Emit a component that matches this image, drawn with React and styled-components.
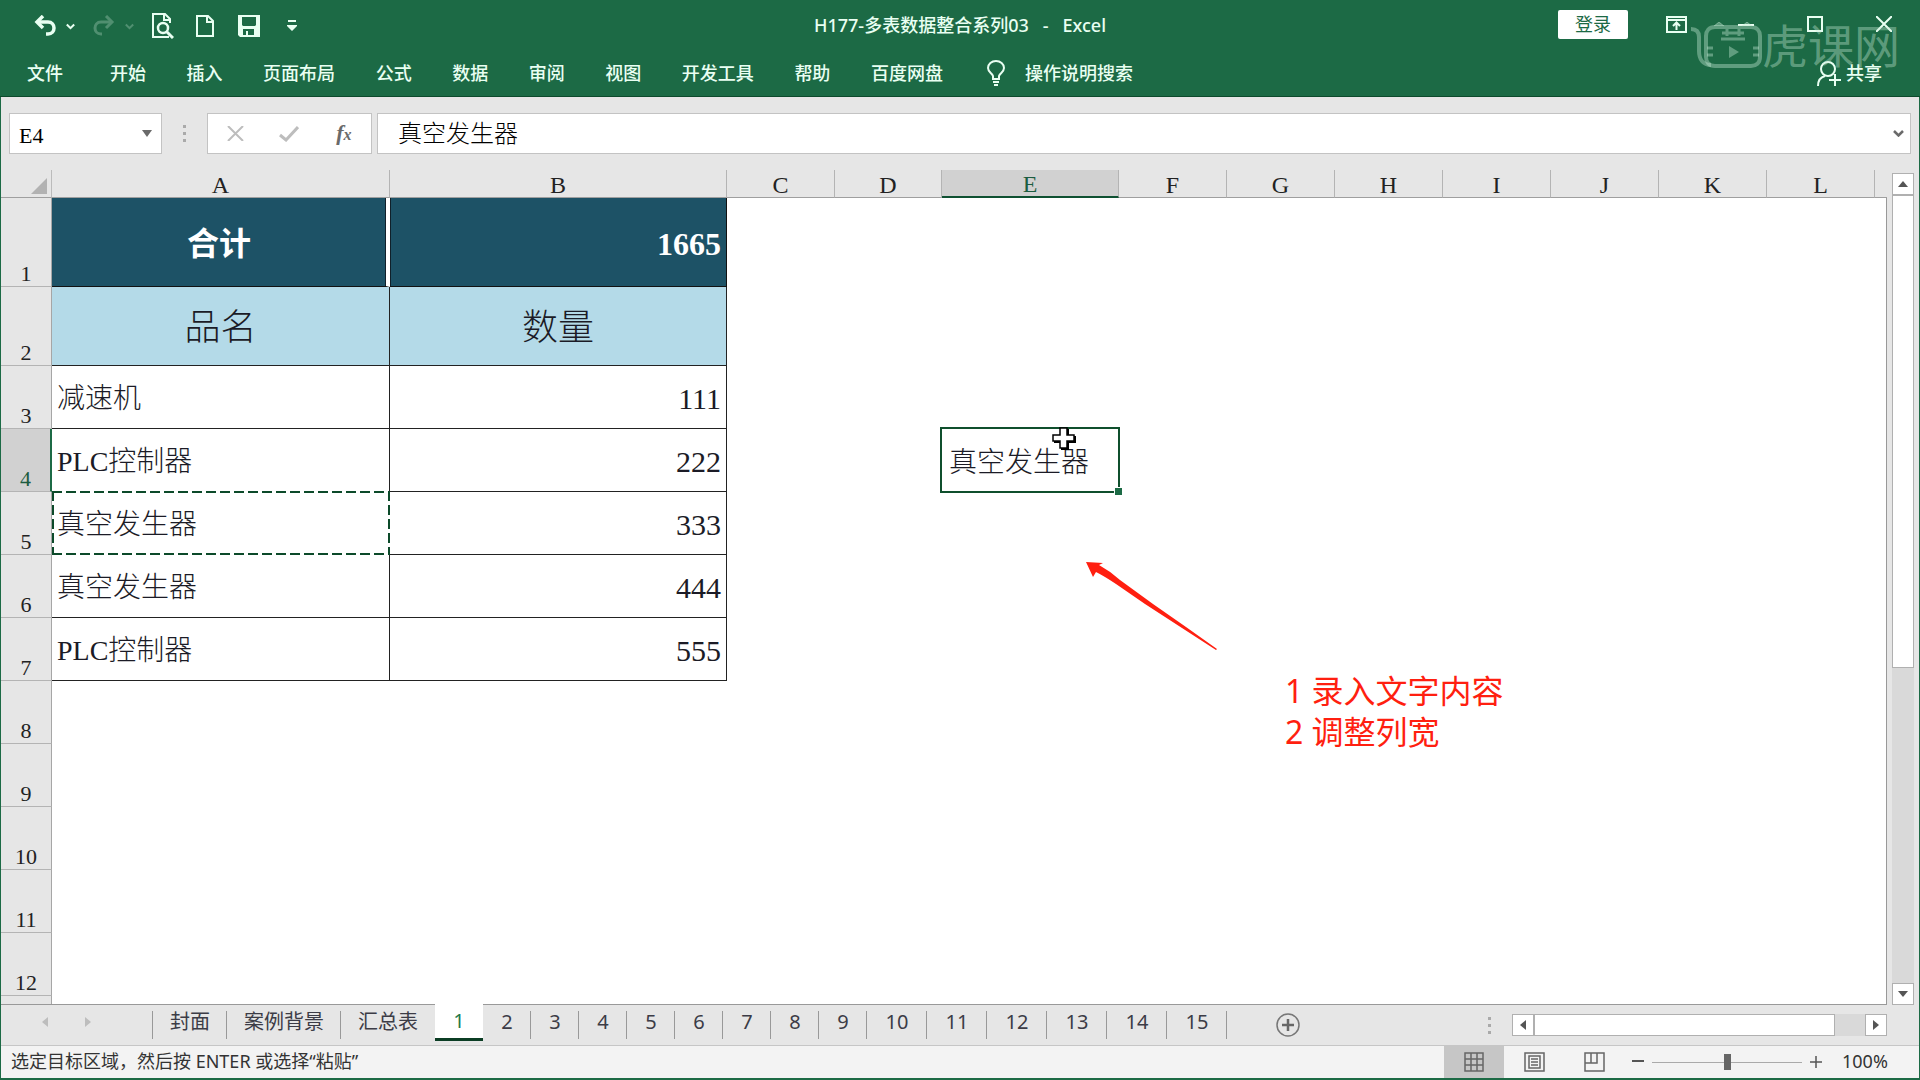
import React, { useState } from 'react';
import styled, { createGlobalStyle, css } from 'styled-components';

const UI_FONT = '"Noto Sans", "Noto Sans CJK SC", sans-serif';
const CELL_FONT = '"Liberation Serif", "Noto Sans CJK SC", serif';

const COLUMNS = [
	{ name: 'A', width: 338 },
	{ name: 'B', width: 337 },
	{ name: 'C', width: 108 },
	{ name: 'D', width: 107 },
	{ name: 'E', width: 177 },
	{ name: 'F', width: 108 },
	{ name: 'G', width: 108 },
	{ name: 'H', width: 108 },
	{ name: 'I', width: 108 },
	{ name: 'J', width: 108 },
	{ name: 'K', width: 108 },
	{ name: 'L', width: 108 },
];

const ROWS = [
	{ height: 89, kind: 'total', A: '合计', B: '1665' },
	{ height: 79, kind: 'head', A: '品名', B: '数量' },
	{ height: 63, kind: 'data', A: '减速机', B: '111' },
	{ height: 63, kind: 'data', A: 'PLC控制器', B: '222', E: '真空发生器' },
	{ height: 63, kind: 'data', A: '真空发生器', B: '333' },
	{ height: 63, kind: 'data', A: '真空发生器', B: '444' },
	{ height: 63, kind: 'data', A: 'PLC控制器', B: '555' },
	{ height: 63 },
	{ height: 63 },
	{ height: 63 },
	{ height: 63 },
	{ height: 63 },
];

const MENUS = [
	'开始',
	'插入',
	'页面布局',
	'公式',
	'数据',
	'审阅',
	'视图',
	'开发工具',
	'帮助',
	'百度网盘',
];

const SHEETS = ['封面', '案例背景', '汇总表'].concat(
	Array.from({ length: 15 }, (_, i) => String(i + 1)),
);

function App() {
	return (
		<Window>
			<GlobalStyle />
			<Header>
				<TitleBar />
				<Menu />
				<Watermark />
			</Header>
			<Main>
				<FormulaBar />
				<Work>
					<Sheet />
					<VScroll>
						<ScrollBtn aria-label="向上滚动">
							<Triangle dir="up" />
						</ScrollBtn>
						<VTrack>
							<VThumb />
						</VTrack>
						<ScrollBtn aria-label="向下滚动">
							<Triangle dir="down" />
						</ScrollBtn>
					</VScroll>
				</Work>
				<SheetTabs />
				<StatusBar />
			</Main>
		</Window>
	);
}

export default App;

function TitleBar() {
	return (
		<TitleRow>
			<QuickAccess>
				<QuickPair>
					<IconBtn aria-label="撤消">
						<svg width="22" height="22" viewBox="0 0 22 22" fill="none" stroke="currentColor" strokeWidth="3.500">
							<path d="M3 7h11c4 0 6 3 6 6s-2 6-6 6h-2" />
							<path d="M9 1L3 7l6 6" />
						</svg>
					</IconBtn>
					<IconBtn aria-label="撤消列表">
						<Chevron width={9} />
					</IconBtn>
				</QuickPair>
				<QuickPair $off>
					<IconBtn aria-label="恢复">
						<svg width="22" height="22" viewBox="0 0 22 22" fill="none" stroke="currentColor" strokeWidth="3">
							<path d="M19 7H8c-4 0-6 3-6 6s2 6 6 6h1" />
							<path d="M13 1l6 6-6 6" />
						</svg>
					</IconBtn>
					<IconBtn aria-label="恢复列表">
						<Chevron width={9} />
					</IconBtn>
				</QuickPair>
				<IconBtn aria-label="打印预览">
					<svg width="22" height="26" viewBox="0 0 22 26" fill="none" stroke="currentColor" strokeWidth="2">
						<path d="M17 24H1V1h12l5 5v4" />
						<path d="M12 2v5h5" />
						<circle cx="11" cy="15" r="5" strokeWidth="2.500" />
						<path d="M15 19l6 6" strokeWidth="3" />
					</svg>
				</IconBtn>
				<IconBtn $w={26} aria-label="新建">
					<svg width="18" height="22" viewBox="0 0 18 22" fill="none" stroke="currentColor" strokeWidth="2">
						<path d="M1 1h11l5 5v15H1z" />
						<path d="M11 1v6h6" />
					</svg>
				</IconBtn>
				<IconBtn $w={26} aria-label="保存">
					<svg width="22" height="22" viewBox="0 0 22 22" fill="currentColor">
						<path
							fillRule="evenodd"
							d="M0 0h22v22H2l-2-2zM4 2v8l1 1h12l1-1V2zM5 14v6h3v-4h2v4h6v-6z"
						/>
					</svg>
				</IconBtn>
				<IconBtn $w={24} aria-label="自定义快速访问工具栏">
					<svg width="10" height="12" viewBox="0 0 10 12" fill="currentColor">
						<path d="M1 0h8v2H1zM0 5h10v1L5 11 0 6z" />
					</svg>
				</IconBtn>
			</QuickAccess>
			<DocTitle>
				H177-多表数据整合系列03<Dash>-</Dash>Excel
			</DocTitle>
			<WindowTools>
				<Login>登录</Login>
				<IconBtn $w={69} aria-label="功能区显示选项">
					<svg width="21" height="17" viewBox="0 0 21 17" fill="none" stroke="currentColor" strokeWidth="2">
						<path d="M1 1h19v15H1zM1 4h19" />
						<path d="M10.500 14V7M7 10l3.500-3.500L14 10" />
					</svg>
				</IconBtn>
				<IconBtn $w={69} aria-label="最小化">
					<svg width="16" height="16" viewBox="0 0 16 16" stroke="currentColor" strokeWidth="2">
						<path d="M0 9h16" />
					</svg>
				</IconBtn>
				<IconBtn $w={69} aria-label="最大化">
					<svg width="16" height="16" viewBox="0 0 16 16" fill="none" stroke="currentColor" strokeWidth="2">
						<path d="M1 1h14v14H1z" />
					</svg>
				</IconBtn>
				<IconBtn $w={69} aria-label="关闭">
					<svg width="16" height="16" viewBox="0 0 16 16" stroke="currentColor" strokeWidth="2">
						<path d="M0 0l16 16M16 0L0 16" />
					</svg>
				</IconBtn>
			</WindowTools>
		</TitleRow>
	);
}

function Chevron({ width = 11 }) {
	return (
		<svg width={width} height="7" viewBox="0 0 11 7" fill="none" stroke="currentColor" strokeWidth="2.500">
			<path d="M1 1l4.500 4.500L10 1" />
		</svg>
	);
}

function Menu() {
	return (
		<MenuRow>
			<MenuBtn $file>文件</MenuBtn>
			<MenuList>
				{MENUS.map(name => (
					<MenuBtn key={name}>{name}</MenuBtn>
				))}
			</MenuList>
			<MenuBtn $tell>
				<svg width="18" height="26" viewBox="0 0 18 26" fill="none" stroke="currentColor" strokeWidth="2">
					<path d="M6 19v-3C5 13 1 12 1 8a8 7 0 0 1 16 0c0 4-4 5-5 8v3z" />
					<path d="M6 22h6M7 25h4" />
				</svg>
				操作说明搜索
			</MenuBtn>
			<MenuBtn $share>
				<svg width="24" height="26" viewBox="0 0 24 26" fill="none" stroke="currentColor" strokeWidth="2">
					<circle cx="11" cy="9" r="7" />
					<path d="M1 26c0-6 3-9 7-10M12 20h12M18 14v12" />
				</svg>
				共享
			</MenuBtn>
		</MenuRow>
	);
}

function Watermark() {
	return (
		<Brand>
			<svg width="71" height="46" viewBox="0 0 71 46" fill="none" stroke="currentColor" strokeWidth="4">
				<path d="M0 7c6 0 8 3 8 8v14c0 8 4 14 12 14" />
				<path d="M24 5h36c6 0 9 4 9 9v21c0 6-4 9-9 9H24c-6 0-9-4-9-9V14c0-5 3-9 9-9z" />
				<path d="M23 4l5-4 5 4M51 4l5-4 5 4" fill="currentColor" strokeWidth="1" />
				<path d="M31 11h22M36 7v7M48 7v7M30 17h24" strokeWidth="3" />
				<path d="M16 26h6M16 33h6M62 26h6M62 33h6" strokeWidth="3" />
				<path d="M38 24l10 6-10 6z" fill="currentColor" stroke="none" />
			</svg>
			虎课网
		</Brand>
	);
}

function FormulaBar() {
	const [address, setAddress] = useState('E4');
	const [formula, setFormula] = useState('真空发生器');

	return (
		<FormulaRow>
			<NameBox>
				<NameInput
					aria-label="名称框"
					value={address}
					onChange={e => setAddress(e.target.value)}
				/>
				<GreyBtn aria-label="名称列表">
					<svg width="10" height="7" viewBox="0 0 10 7" fill="currentColor">
						<path d="M0 0h10L5 7z" />
					</svg>
				</GreyBtn>
			</NameBox>
			<Dots />
			<FormulaTools>
				<GreyBtn $pale aria-label="取消">
					<svg width="17" height="15" viewBox="0 0 17 15" stroke="currentColor" strokeWidth="2">
						<path d="M1 0l15 15M16 0L1 15" />
					</svg>
				</GreyBtn>
				<GreyBtn $pale aria-label="输入">
					<svg width="20" height="16" viewBox="0 0 20 16" fill="none" stroke="currentColor" strokeWidth="3">
						<path d="M1 9l6 5L19 1" />
					</svg>
				</GreyBtn>
				<GreyBtn aria-label="插入函数">
					<Fx>
						f<small>x</small>
					</Fx>
				</GreyBtn>
			</FormulaTools>
			<FormulaBox>
				<FormulaInput
					aria-label="编辑栏"
					value={formula}
					onChange={e => setFormula(e.target.value)}
				/>
				<GreyBtn aria-label="展开编辑栏">
					<Chevron />
				</GreyBtn>
			</FormulaBox>
		</FormulaRow>
	);
}

function Dots() {
	return (
		<DotColumn>
			<i />
			<i />
			<i />
		</DotColumn>
	);
}

function Sheet() {
	return (
		<SheetWrap>
			<Table>
				<colgroup>
					<Col $width={51} />
					{COLUMNS.map(col => (
						<Col key={col.name} $width={col.width} />
					))}
					<Col />
				</colgroup>
				<thead>
					<tr>
						<Corner>
							<svg width="16" height="16" viewBox="0 0 16 16" fill="#b2b2b2">
								<path d="M16 0v16H0z" />
							</svg>
						</Corner>
						{COLUMNS.map(col => (
							<ColHead key={col.name} scope="col" $active={col.name === 'E'}>
								{col.name}
							</ColHead>
						))}
						<ColHead as="td" $last />
					</tr>
				</thead>
				<tbody>
					{ROWS.map((row, i) => (
						<Row key={i} $height={row.height}>
							<RowHead scope="row" $active={i === 3}>
								{i + 1}
							</RowHead>
							{COLUMNS.map(col => {
								const filled = row.kind && (col.name === 'A' || col.name === 'B');
								const copied = i === 4 && col.name === 'A';
								const selected = i === 3 && col.name === 'E';
								return (
									<Cell
										key={col.name}
										$kind={filled ? row.kind : undefined}
										$col={col.name}
										$raised={copied || selected}
									>
										{row[col.name]}
										{copied && <Ants />}
										{selected && (
											<Selection>
												<Handle />
											</Selection>
										)}
									</Cell>
								);
							})}
							<Cell $last />
						</Row>
					))}
					<Row $height={63}>
						<RowHead as="td" />
						{COLUMNS.map(col => (
							<Cell key={col.name} />
						))}
						<Cell $last />
					</Row>
				</tbody>
			</Table>
			<Cursor width="25" height="26" viewBox="0 0 25 26">
				<path d="M9 3h8v7h7v7h-7v7H9v-7H2v-7h7z" fill="#000" />
				<path d="M8 2h7v7h7v6h-7v7H8v-7H1V9h7z" fill="#fff" stroke="#000" strokeWidth="1.500" />
			</Cursor>
			<Arrow width="132" height="90" viewBox="0 0 132 90">
				<path
					d="M0 0L17 1 13 3Q24 9 34 18L67 42 100 65 131 87 130 88 96 66 59 42 30 22Q18 14 10 10L7 15z"
					fill="#ff1f10"
				/>
			</Arrow>
			<Note>
				1 录入文字内容
				<br />2 调整列宽
			</Note>
		</SheetWrap>
	);
}

function Triangle({ dir }) {
	const d = {
		up: 'M0 8l5-6 5 6z',
		down: 'M0 2h10L5 8z',
		left: 'M8 0v10L2 5z',
		right: 'M2 0l6 5-6 5z',
	}[dir];
	return (
		<svg width="10" height="10" viewBox="0 0 10 10" fill="currentColor">
			<path d={d} />
		</svg>
	);
}

function SheetTabs() {
	const [active, setActive] = useState('1');

	return (
		<TabBar>
			<TabNav>
				<GreyBtn $pale aria-label="上一张">
					<Triangle dir="left" />
				</GreyBtn>
				<GreyBtn $pale aria-label="下一张">
					<Triangle dir="right" />
				</GreyBtn>
			</TabNav>
			{SHEETS.map((name, i) => (
				<Tab
					key={name}
					$active={name === active}
					$beforeActive={SHEETS[i + 1] === active}
					$min={name.length === 1 ? 48 : 60}
					onClick={() => setActive(name)}
				>
					{name}
				</Tab>
			))}
			<AddSheet aria-label="新工作表">
				<svg width="24" height="24" viewBox="0 0 24 24" fill="none" stroke="#777">
					<circle cx="12" cy="12" r="11" strokeWidth="1.500" />
					<path d="M12 6v12M6 12h12" stroke="#666" strokeWidth="2.500" />
				</svg>
			</AddSheet>
			<Dots />
			<HScroll>
				<ScrollBtn aria-label="向左滚动">
					<Triangle dir="left" />
				</ScrollBtn>
				<HTrack>
					<HThumb />
				</HTrack>
				<ScrollBtn aria-label="向右滚动">
					<Triangle dir="right" />
				</ScrollBtn>
			</HScroll>
		</TabBar>
	);
}

function StatusBar() {
	const [zoom, setZoom] = useState(100);

	return (
		<Status>
			<StatusText>选定目标区域，然后按 ENTER 或选择“粘贴”</StatusText>
			<ViewBtn $active aria-label="普通">
				<svg width="20" height="20" viewBox="0 0 20 20" fill="none" stroke="#666" strokeWidth="1.500">
					<path d="M1 1h18v18H1zM7 1v18M13 1v18M1 7h18M1 13h18" />
				</svg>
			</ViewBtn>
			<ViewBtn aria-label="页面布局">
				<svg width="21" height="20" viewBox="0 0 21 20" fill="none" stroke="#666" strokeWidth="1.500">
					<path d="M1 1h19v18H1zM5 4h11v12H5zM7 7h7M7 10h7M7 13h7" />
				</svg>
			</ViewBtn>
			<ViewBtn aria-label="分页预览">
				<svg width="21" height="20" viewBox="0 0 21 20" fill="none" stroke="#666" strokeWidth="1.500">
					<path d="M1 1h19v18H1zM1 11h12V1M7 1v10" />
				</svg>
			</ViewBtn>
			<ZoomBtn aria-label="缩小" onClick={() => setZoom(zoom - 10)}>
				<svg width="12" height="12" viewBox="0 0 12 12" stroke="#555" strokeWidth="2">
					<path d="M0 5h12" />
				</svg>
			</ZoomBtn>
			<Zoom
				type="range"
				aria-label="显示比例"
				min="0"
				max="200"
				value={zoom}
				onChange={e => setZoom(Number(e.target.value))}
			/>
			<ZoomBtn aria-label="放大" onClick={() => setZoom(zoom + 10)}>
				<svg width="12" height="12" viewBox="0 0 12 12" stroke="#555" strokeWidth="1.500">
					<path d="M0 6h12M6 0v12" />
				</svg>
			</ZoomBtn>
			<Percent>{zoom}%</Percent>
		</Status>
	);
}

const GlobalStyle = createGlobalStyle`
	* {
		box-sizing: border-box;
	}
	body {
		margin: 0;
		font-family: ${UI_FONT};
	}
	button, input {
		margin: 0;
		padding: 0;
		border: none;
		background: none;
		font: inherit;
		color: inherit;
	}
	svg {
		display: block;
		flex: none;
	}
`;

const CenterCSS = css`
	display: flex;
	align-items: center;
	justify-content: center;
`;

const Window = styled.div`
	display: flex;
	flex-direction: column;
	height: 100vh;
	overflow: hidden;
`;
const Header = styled.header`
	position: relative;
	background: #1c6a45;
	border-bottom: 1px solid #0d4a2c;
	color: #e9fff2;
	font-size: 18px;
	line-height: 24px;
`;
const TitleRow = styled.div`
	display: grid;
	grid-template-columns: 1fr auto 1fr;
	align-items: center;
	height: 48px;
	padding: 0 2px;
`;
const QuickAccess = styled.div`
	display: flex;
	align-items: center;
	gap: 18px;
	padding: 4px 0 0 32px;
`;
const QuickPair = styled.div`
	display: flex;
	align-items: center;
	gap: 10px;
	opacity: ${({ $off }) => ($off ? 0.25 : 1)};
`;
const IconBtn = styled.button`
	${CenterCSS}
	width: ${({ $w }) => ($w ? $w + 'px' : 'auto')};
`;
const DocTitle = styled.div`
	padding-top: 2px;
	font-weight: 500;
`;
const Dash = styled.span`
	margin: 0 14px;
`;
const WindowTools = styled.div`
	display: flex;
	align-items: center;
	justify-content: flex-end;
`;
const Login = styled.button`
	width: 70px;
	height: 29px;
	margin-right: 14px;
	border-radius: 2px;
	background: #fff;
	color: #1c6a45;
`;
const MenuRow = styled.nav`
	display: flex;
	align-items: center;
	height: 48px;
	padding: 2px 38px 0 27px;
`;
const MenuList = styled.div`
	display: flex;
	justify-content: space-between;
	flex: 0 0 833px;
`;
const MenuBtn = styled.button`
	display: flex;
	align-items: center;
	gap: ${({ $share }) => ($share ? 5 : 20)}px;
	margin-right: ${({ $file }) => ($file ? 47 : 0)}px;
	margin-left: ${({ $share, $tell }) => ($share ? 'auto' : $tell ? '44px' : 0)};
	font-weight: 500;
`;
const Brand = styled.div`
	position: absolute;
	top: 22px;
	right: 20px;
	display: flex;
	align-items: center;
	color: rgba(200, 235, 215, 0.4);
	font-size: 46px;
	line-height: 42px;
	pointer-events: none;
`;
const Main = styled.main`
	flex: 1;
	min-height: 0;
	display: flex;
	flex-direction: column;
	background: #e6e6e6;
	border: solid #1c6a45;
	border-width: 0 1px 2px;
`;
const FormulaRow = styled.div`
	display: flex;
	padding: 16px 8px;
`;
const BoxCSS = css`
	display: flex;
	height: 41px;
	border: 1px solid #c3c3c3;
	background: #fff;
`;
const NameBox = styled.div`
	${BoxCSS}
	width: 153px;
	padding-right: 9px;
`;
const NameInput = styled.input`
	flex: 1;
	min-width: 0;
	padding: 4px 0 0 9px;
	font-family: ${CELL_FONT};
	font-size: 22px;
`;
const GreyBtn = styled.button`
	${CenterCSS}
	color: ${({ $pale }) => ($pale ? '#bdbdbd' : '#6a6a6a')};
`;
const DotColumn = styled.div`
	${CenterCSS}
	flex-direction: column;
	gap: 4px;
	width: 45px;
	i {
		width: 3px;
		height: 3px;
		background: #aaa;
	}
`;
const FormulaTools = styled.div`
	${BoxCSS}
	width: 165px;
	margin-right: 5px;
	${GreyBtn} {
		flex: 1;
	}
`;
const Fx = styled.span`
	font: italic bold 22px/24px 'Liberation Serif', serif;
	small {
		font-size: 16px;
	}
`;
const FormulaBox = styled.div`
	${BoxCSS}
	flex: 1;
	padding-right: 6px;
`;
const FormulaInput = styled.input`
	flex: 1;
	padding: 0 0 4px 20px;
	font-family: ${CELL_FONT};
	font-size: 24px;
	font-weight: 300;
`;
const Work = styled.div`
	flex: 1;
	min-height: 0;
	display: flex;
`;
const SheetWrap = styled.div`
	position: relative;
	flex: 1;
	overflow: hidden;
	border-bottom: 1px solid #999;
`;
const Table = styled.table`
	width: 100%;
	table-layout: fixed;
	border-collapse: separate;
	border-spacing: 0;
	font-family: ${CELL_FONT};
	th,
	td {
		padding: 0;
	}
`;
const Col = styled.col`
	width: ${({ $width }) => ($width ? $width + 'px' : 'auto')};
`;
const Corner = styled.th`
	height: 28px;
	border-right: 1px solid #bbb;
	border-bottom: 1px solid #9f9f9f;
	svg {
		margin: 4px 4px 0 auto;
	}
`;
const ColHead = styled.th`
	height: 28px;
	border-bottom: ${({ $active }) => ($active ? '2px solid #0f5132' : '1px solid #9f9f9f')};
	border-right: ${({ $last }) => ($last ? 0 : 1)}px solid #b4b4b4;
	background: ${({ $active }) => ($active ? '#d1d1d1' : '#e6e6e6')};
	color: ${({ $active }) => ($active ? '#1c5c40' : '#222')};
	font-size: 24px;
	font-weight: 400;
	line-height: 24px;
	vertical-align: bottom;
`;
const Row = styled.tr`
	height: ${({ $height }) => $height}px;
`;
const RowHead = styled.th`
	border-bottom: 1px solid #b4b4b4;
	border-right: ${({ $active }) => ($active ? '2px solid #1c6a45' : '1px solid #a6a6a6')};
	background: ${({ $active }) => ($active ? '#d1d1d1' : '#e6e6e6')};
	color: ${({ $active }) => ($active ? '#1c5c40' : '#222')};
	font-size: 22px;
	font-weight: 400;
	line-height: 24px;
	vertical-align: bottom;
`;
const kinds = {
	total: css`
		background: #1d5266;
		color: #fff;
		font-size: 32px;
		font-weight: 700;
		text-align: ${({ $col }) => ($col === 'A' ? 'center' : 'right')};
		border-bottom: 1px solid #111;
		border-right: ${({ $col }) => ($col === 'A' ? '4px solid #fff' : '1px solid #111')};
		box-shadow: inset ${({ $col }) => ($col === 'A' ? -1 : 1)}px 0 #10202a;
	`,
	head: css`
		background: #b4dae8;
		font-size: 36px;
		text-align: center;
		border: solid #222;
		border-width: 0 1px 1px 0;
	`,
	data: css`
		font-size: ${({ $col }) => ($col === 'A' ? 28 : 30)}px;
		text-align: ${({ $col }) => ($col === 'A' ? 'left' : 'right')};
		border: solid #222;
		border-width: 0 1px 1px 0;
	`,
};
const Cell = styled.td`
	background: #fff;
	color: #1b1b26;
	font-size: 28px;
	font-weight: 300;
	line-height: 36px;
	vertical-align: middle;
	white-space: nowrap;
	border-right: ${({ $last }) => ($last ? 1 : 0)}px solid #999;
	${({ $raised }) =>
		$raised &&
		css`
			position: relative;
			z-index: 1;
		`}
	${({ $kind }) => kinds[$kind]}
	&& {
		padding: 4px ${({ $kind }) => ($kind === 'head' ? 0 : $kind ? 5 : 7)}px 0;
	}
`;
const ants = dir => `repeating-linear-gradient(${dir}, #0c4a2a 0 10px, #fff 10px 14px)`;
const Ants = styled.span`
	position: absolute;
	inset: -1px -1px -1px 0;
	background:
		${ants('90deg')} top / 100% 2px no-repeat,
		${ants('90deg')} bottom / 100% 2px no-repeat,
		${ants('180deg')} left / 2px 100% no-repeat,
		${ants('180deg')} right / 2px 100% no-repeat;
`;
const Selection = styled.span`
	position: absolute;
	inset: -2px -1px -1px -2px;
	border: 2px solid #0f4f2d;
`;
const Handle = styled.span`
	position: absolute;
	right: -5px;
	bottom: -5px;
	width: 9px;
	height: 9px;
	border: 1px solid #fff;
	background: #1c6a45;
`;
const Cursor = styled.svg`
	position: absolute;
	z-index: 2;
	left: 1051px;
	top: 256px;
`;
const Arrow = styled.svg`
	position: absolute;
	left: 1085px;
	top: 392px;
`;
const Note = styled.div`
	position: absolute;
	left: 1284px;
	top: 500px;
	color: #ff1f10;
	font-size: 32px;
	line-height: 41px;
`;
const VScroll = styled.div`
	display: flex;
	flex-direction: column;
	width: 32px;
	padding: 3px 5px 0;
`;
const ScrollBtn = styled.button`
	${CenterCSS}
	flex: none;
	width: 22px;
	height: 22px;
	border: 1px solid #b0b0b0;
	background: #fff;
	color: #555;
`;
const VTrack = styled.div`
	flex: 1;
	background: #d9d9d9;
`;
const VThumb = styled.div`
	height: 60%;
	border: 1px solid #b0b0b0;
	background: #fff;
`;
const TabBar = styled.div`
	display: flex;
	height: 41px;
	padding-right: 32px;
	border-bottom: 1px solid #c6c6c6;
`;
const TabNav = styled.div`
	display: flex;
	gap: 33px;
	width: 152px;
	padding-left: 39px;
	height: 34px;
	background: linear-gradient(#999, #999) right bottom / 1px 28px no-repeat;
`;
const Tab = styled.button`
	position: relative;
	height: 34px;
	min-width: ${({ $min }) => $min}px;
	padding: 0 17px;
	background: linear-gradient(#999, #999) right bottom / ${({ $beforeActive }) => ($beforeActive ? 0 : 1)}px 28px no-repeat;
	color: #3c3c46;
	font-size: 20px;
	line-height: 34px;
	${({ $active }) =>
		$active &&
		css`
			z-index: 1;
			margin-top: -1px;
			height: 37px;
			background: #fff;
			border-bottom: 3px solid #0b3d24;
			color: #1c7a4c;
		`}
`;
const AddSheet = styled.button`
	${CenterCSS}
	width: 24px;
	margin: 0 auto 0 49px;
`;
const HScroll = styled.div`
	display: flex;
	align-items: center;
	width: 375px;
`;
const HTrack = styled.div`
	flex: 1;
	height: 22px;
	background: #d9d9d9;
`;
const HThumb = styled.div`
	width: 91%;
	height: 22px;
	border: 1px solid #b0b0b0;
	background: #fff;
`;
const Status = styled.footer`
	display: flex;
	align-items: stretch;
	height: 32px;
	padding-right: 29px;
	background: #f3f3f3;
	color: #333;
	font-size: 18px;
	line-height: 30px;
`;
const StatusText = styled.div`
	flex: 1;
	padding-left: 10px;
`;
const ViewBtn = styled.button`
	${CenterCSS}
	width: 60px;
	background: ${({ $active }) => ($active ? '#c6c6c6' : 'none')};
`;
const ZoomBtn = styled.button`
	${CenterCSS}
	width: 28px;
`;
const Zoom = styled.input`
	appearance: none;
	width: 150px;
	background: linear-gradient(#aaa, #aaa) center / 100% 1px no-repeat;
	&::-webkit-slider-thumb {
		appearance: none;
		width: 7px;
		height: 16px;
		background: #666;
	}
`;
const Percent = styled.span`
	width: 60px;
	padding-left: 12px;
`;
